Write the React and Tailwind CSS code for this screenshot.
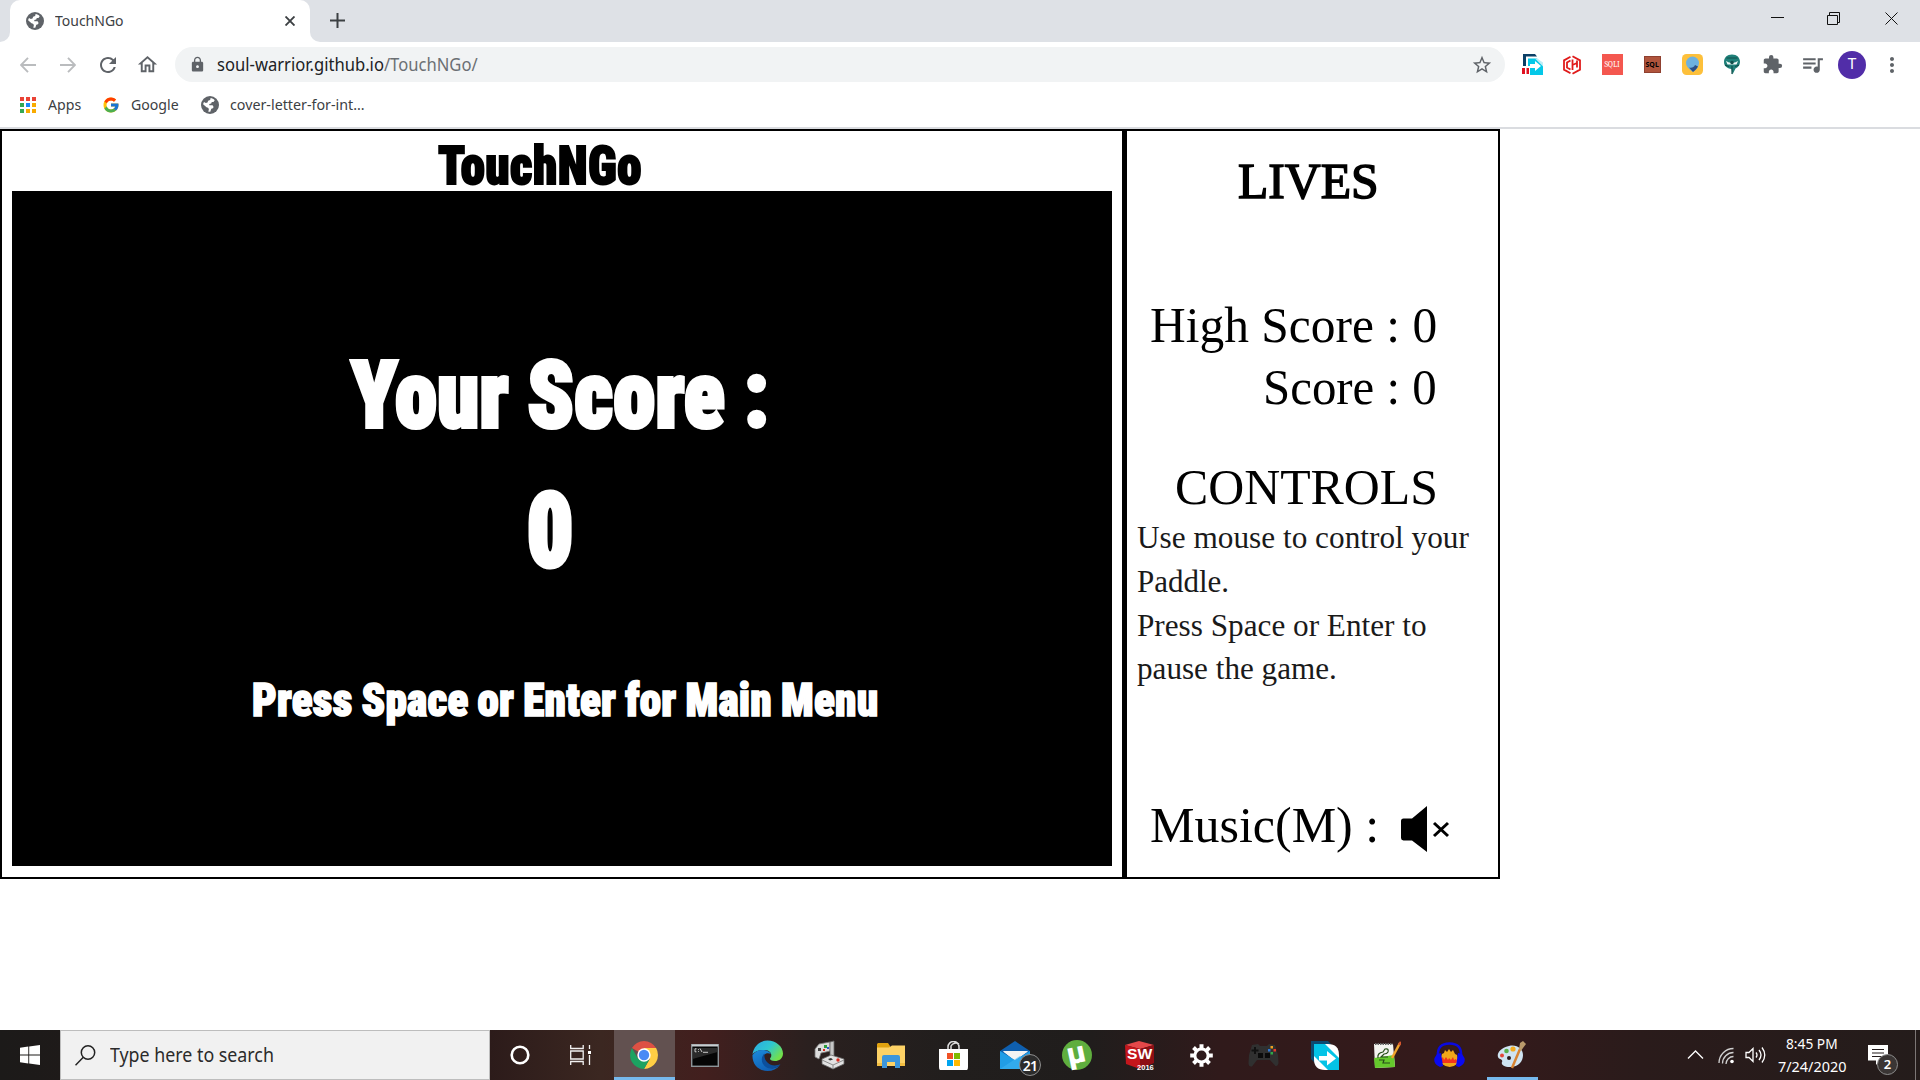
import { useLayoutEffect, useRef } from "react";
import {
  MdLock,
  MdRefresh,
  MdStarBorder,
  MdExtension,
  MdQueueMusic,
  MdMoreVert,
  MdOutlineHome,
} from "react-icons/md";
import { FcGoogle } from "react-icons/fc";

// Text on one line, condensed or widened to fill the given width.
function Fit({ width, className = "", children }) {
  const ref = useRef(null);
  useLayoutEffect(() => {
    const el = ref.current;
    el.style.transform = `scaleX(${width / el.offsetWidth})`;
  }, [width]);
  return (
    <span className={`block whitespace-nowrap ${className}`} style={{ width }}>
      <span ref={ref} className="inline-block origin-left">
        {children}
      </span>
    </span>
  );
}

const Globe = () => (
  <svg width="18" height="18" viewBox="0 0 18 18">
    <circle cx="9" cy="9" r="9" fill="#5f6368" />
    <path d="M9.600 2.100c1.600.2 3 .9 4.100 2.100l-1.200 1.700-1.700.2-.6 1.400-1.900.4v1.400h3.300l1 1.600-.7 1.400-1.600.5-1 2.900c-.7.2-1.400.1-2 0l.6-2.600-.9-1.300-1.500-.6L2.100 8.300c.2-.9.5-1.700.9-2.400l1.800 1 1.700-.4.6-1.800 2-.7z" fill="#fff" />
  </svg>
);

const AppsGrid = () => (
  <span className="grid grid-cols-3 gap-[2px]">
    {["bg-[#ea4335]", "bg-[#ea4335]", "bg-[#ea4335]", "bg-[#34a853]", "bg-[#1a88f8]", "bg-[#f9ab00]", "bg-[#34a853]", "bg-[#f9ab00]", "bg-[#f9ab00]"].map((c, i) => (
      <span key={i} className={`size-1 ${c}`} />
    ))}
  </span>
);

function TabStrip() {
  return (
    <div className="flex h-[42px] bg-[#dee1e6] text-[#3c4043]">
      <div className="flex w-[10px] bg-white">
        <span className="w-full rounded-br-[10px] bg-[#dee1e6]" />
      </div>
      <div className="flex w-[300px] items-center rounded-t-[10px] bg-white pl-4">
        <Globe />
        <Fit width={69} className="ml-[11px] pb-[2px] text-[15px] leading-5">TouchNGo</Fit>
        <svg className="ml-[161px]" width="10" height="10" viewBox="0 0 10 10" stroke="#3c4043" strokeWidth="1.9">
          <path d="M.5.5l9 9M9.500.5l-9 9" />
        </svg>
      </div>
      <div className="flex w-[10px] bg-white">
        <span className="w-full rounded-bl-[10px] bg-[#dee1e6]" />
      </div>
      <svg className="mt-[13px] ml-[10px]" width="15" height="15" viewBox="0 0 15 15" stroke="#3c4043" strokeWidth="2">
        <path d="M7.500 0v15M0 7.500h15" />
      </svg>
      <div className="ml-auto flex pr-[22px]">
        <svg className="mt-3" width="127" height="13" viewBox="0 0 127 13" fill="none" stroke="#111" strokeWidth="1">
          <path d="M0 5.500h13M56.500 3.500h10v9h-10zM58.500 3v-2.500h10v10h-2" />
          <path d="M114.500.5l12 12M126.500.5l-12 12" />
        </svg>
      </div>
    </div>
  );
}

const Slot = ({ children }) => (
  <span className="flex w-10 items-center justify-center">{children}</span>
);

function Extensions() {
  return (
    <div className="ml-[7px] flex text-[#5f6368]">
      <Slot>
        <svg width="21" height="21" viewBox="0 0 21 21">
          <path d="M1 0h12l2 2.500H4V12H1z" fill="#0b3f66" />
          <path d="M6 4.500h9l6 6V21H8V12H6z" fill="#04c8e8" />
          <path d="M15 4.500h-2l8 8v-4z" fill="#bfeef7" />
          <path d="M8 10h5V7l6 5-6 5v-3H8z" fill="#fff" />
          <path d="M0 14h3v6H0zM4.500 14h2.500v6H4.500z" fill="#e01020" />
        </svg>
      </Slot>
      <Slot>
        <svg width="20" height="20" viewBox="0 0 20 20" fill="none" stroke="#e01b1b" strokeWidth="1.800">
          <path d="M8.500 1.800L2 5.400v9.200l6.500 3.600M8.500 5.500L5 7.500v5l3.500 2M10.500 1.300L18 5.400v9.200l-7.500 4.100M10.500 4.500v10.500M10.500 10l4.500-2M15 5.500v7" />
        </svg>
      </Slot>
      <Slot>
        <span className="flex size-[21px] items-center justify-center bg-[#f4574f]">
          <Fit width={15} className="font-serif text-[8px] leading-none text-white">SQLI</Fit>
        </span>
      </Slot>
      <Slot>
        <span className="flex size-[17px] items-center justify-center border border-[#8f4030] bg-[#b0543c]">
          <Fit width={13} className="text-[7px] leading-none font-bold text-black">SQL</Fit>
        </span>
      </Slot>
      <Slot>
        <svg width="21" height="21" viewBox="0 0 21 21">
          <rect width="21" height="21" rx="4.500" fill="#fdc03b" />
          <path d="M11 18C6.500 15 4 12 4 9a6.500 6.500 0 0 1 13 0c0 3-2 6-6 9z" fill="#6db1df" />
          <path d="M11 18l-4-4.500c2.500.8 5 0 6-2.500l3 1.500c-1 2-3 4-5 5.500z" fill="#2d4f86" />
        </svg>
      </Slot>
      <Slot>
        <svg width="18" height="21" viewBox="0 0 18 21">
          <path d="M9 .5c5 0 8 3 8 7.500 0 3-2 5.500-4.500 6.500L9.500 20.500 8.500 15C4 14.500 1 12 1 8 1 3.500 4 .5 9 .5z" fill="#1f8079" />
          <path d="M3.500 4h11M2 11l4 1.500M16 11l-4 1.500M9 12v8" stroke="#124f4c" strokeWidth="1.200" />
          <path d="M3 7l3 1.500h6L15 7l-1.500 3.500h-9z" fill="#f3faf9" />
          <circle cx="9" cy="8.500" r="1.800" fill="#124f4c" />
        </svg>
      </Slot>
      <Slot><MdExtension size={21} /></Slot>
      <Slot><MdQueueMusic size={25} /></Slot>
      <Slot>
        <span className="flex size-7 items-center justify-center rounded-full bg-[#512da8] font-[Roboto] text-[15px] text-white">T</span>
      </Slot>
      <Slot><MdMoreVert size={24} /></Slot>
    </div>
  );
}

function Toolbar() {
  return (
    <div className="flex h-[45px] items-center pr-2">
      <svg className="ml-5" width="56" height="16" viewBox="0 0 56 16" fill="none" stroke="#babcbe" strokeWidth="1.900">
        <path d="M8 .8L1 8l7 7.200M1 8h15M48 .8L55 8l-7 7.200M55 8H40" />
      </svg>
      <MdRefresh className="ml-[20px] text-[#5f6368]" size={24} />
      <MdOutlineHome className="ml-[16px] text-[#5f6368]" size={23} />
      <div className="ml-4 flex h-[35px] w-[1330px] items-center rounded-full bg-[#f1f3f4] pr-3">
        <MdLock className="ml-[14px] text-[#5f6368]" size={17} />
        <Fit width={261} className="ml-[11px] pb-[2px] text-[18px] leading-6 text-[#202124]">
          soul-warrior.github.io<span className="text-[#6b6f73]">/TouchNGo/</span>
        </Fit>
        <MdStarBorder className="ml-auto text-[#5f6368]" size={22} />
      </div>
      <Extensions />
    </div>
  );
}

function Bookmarks() {
  return (
    <div className="flex h-[42px] items-center border-b-2 border-[#dadce0] pb-[5px] pl-5 text-[15px] leading-5 text-[#3c4043]">
      <AppsGrid />
      <Fit width={33} className="ml-3 pb-px">Apps</Fit>
      <FcGoogle className="ml-[21px]" size={18} />
      <Fit width={48} className="ml-[11px] pb-px">Google</Fit>
      <span className="ml-[22px]"><Globe /></span>
      <Fit width={135} className="ml-[11px] pb-px">cover-letter-for-int...</Fit>
    </div>
  );
}

function GameScreen() {
  return (
    <div className="w-[1125px] border-2 border-r-[3px] border-black px-[10px] font-[Roboto] font-black [font-stretch:75%] [word-spacing:-0.08em]">
      <h1 className="flex h-[60px] pt-2 pl-[426px] text-[54px] leading-[54px] tracking-[0.5px] text-black [-webkit-text-stroke:2px_black]">
        <Fit width={204}>TouchNGo</Fit>
      </h1>
      <div className="h-[675px] bg-black text-white">
        <div className="pt-[155px] pl-[339px] text-[93px] leading-[100px] tracking-[0.5px] [-webkit-text-stroke:4px_white]">
          <Fit width={418}>Your Score :</Fit>
        </div>
        <div className="mt-[35px] pl-[515px] text-[102px] leading-[100px] [-webkit-text-stroke:5px_white]">
          <Fit width={46}>0</Fit>
        </div>
        <div className="mt-[94px] pl-[240px] text-[47px] leading-[50px] tracking-[0.3px] [-webkit-text-stroke:1.700px_white]">
          <Fit width={626}>Press Space or Enter for Main Menu</Fit>
        </div>
      </div>
    </div>
  );
}

function SidePanel() {
  return (
    <div className="w-[375px] border-2 border-black pl-[10px] font-['Liberation_Serif'] text-[50px] leading-[62px] text-black">
      <h2 className="pt-[19px] pl-[101px] font-normal [-webkit-text-stroke:1.500px_black]">
        <Fit width={141}>LIVES</Fit>
      </h2>
      <div className="mt-[82px] flex w-[300px] flex-col items-end">
        <Fit width={287}>High Score : 0</Fit>
        <Fit width={174}>Score : 0</Fit>
      </div>
      <h2 className="mt-[39px] pl-[38px] font-normal leading-[60px]">
        <Fit width={263}>CONTROLS</Fit>
      </h2>
      <div className="-mt-px text-[31px] leading-[43.800px] text-[#1a1a1a]">
        <Fit width={332}>Use mouse to control your</Fit>
        <Fit width={92}>Paddle.</Fit>
        <Fit width={290}>Press Space or Enter to</Fit>
        <Fit width={200}>pause the game.</Fit>
      </div>
      <div className="mt-[103px] flex pl-[13px]">
        <Fit width={229}>Music(M) :</Fit>
        <svg className="mt-3 ml-[22px]" width="49" height="47" viewBox="0 0 49 47">
          <path d="M2.500 12.500H11L26 0v46L11 34.500H2.500Q0 34 0 32V15q0-2.500 2.500-2.500z" />
          <path d="M33 17l14 13M47 17L33 30" stroke="#000" strokeWidth="3" />
        </svg>
      </div>
    </div>
  );
}

const ChromeIcon = () => (
  <svg width="28" height="28" viewBox="0 0 28 28">
    <path d="M14 14L1.900 7A14 14 0 0 1 26.100 7z" fill="#dd5144" />
    <path d="M14 14V7h12.100A14 14 0 0 1 14 28l6-10.500z" fill="#ffce44" />
    <path d="M14 14l5 5-5 9A14 14 0 0 1 1.900 7l6 10.500z" fill="#1ca261" />
    <circle cx="14" cy="14" r="6.700" fill="#fff" />
    <circle cx="14" cy="14" r="5.200" fill="#4a8af5" />
  </svg>
);

const CmdIcon = () => (
  <svg width="28" height="23" viewBox="0 0 28 23">
    <rect x=".7" y=".7" width="26.600" height="21.600" fill="#050505" stroke="#8c9498" strokeWidth="1.400" />
    <path d="M1 1.500h26" stroke="#c9cdd0" strokeWidth="2" />
    <path d="M1.500 4h25v4L1.500 15z" fill="#3a3a3a" opacity=".7" />
    <path d="M5.500 4.800H4v3h1.500M7.500 5v.8M7.500 7v.8M9 4.500L11 8M12 8.300h5" stroke="#ddd" fill="none" strokeWidth=".9" />
  </svg>
);

const EdgeIcon = () => (
  <svg width="31" height="31" viewBox="0 0 31 31">
    <defs>
      <linearGradient id="edgeTop" x1="0" x2="1" y2=".6"><stop stopColor="#2aa7e6" /><stop offset=".55" stopColor="#2fc8cf" /><stop offset="1" stopColor="#72e04b" /></linearGradient>
      <linearGradient id="edgeLow" y1="0" x2=".5" y2="1"><stop stopColor="#1b8bdc" /><stop offset="1" stopColor="#1160b4" /></linearGradient>
    </defs>
    <path d="M.5 14.500C1.500 6 8 .5 15.500.5 24 .5 31 6.500 31 13.500c0 5-4 7.500-8 7.500-3.500 0-5-1.200-5-2.200 0-.8 1.300-1.300 1.300-3.600 0-3.200-3-5.200-7.300-5.200C6 10 2 12 .5 14.500z" fill="url(#edgeTop)" />
    <path d="M.5 15C3 11.500 7 9.500 12 10c3.500.4 6 2 7 4-5-2-8.500 1-8.500 5.500 0 6 6 9.500 11.500 8.500 2-.4 4.500-1.500 6-3C25 29 20.500 31 15.500 31 7 31 0 24.500.5 15z" fill="url(#edgeLow)" />
    <path d="M12.500 13.500c-2.500 2-3.500 6-2 9.500 2 4.500 6.500 6.500 12 5 3-.8 5-2.500 6-4-5 2.500-10 1.500-13-1.500-2.500-2.500-3.500-5.500-3-9z" fill="#0c4f9c" />
  </svg>
);

const JoystickIcon = () => (
  <svg width="31" height="30" viewBox="0 0 31 30">
    <path d="M1 17V9l4-5 11-2v9l-4 1-5 1-2 6z" fill="#dcdcdc" stroke="#777" strokeWidth=".8" />
    <path d="M10 5h3v3h-3z" fill="#2b9c3c" /><path d="M9 9h2v2H9z" fill="#d82c20" /><path d="M13 7h2v2h-2z" fill="#2b57c8" /><path d="M4 8h3v3H4z" fill="#444" />
    <path d="M16 2l4-1v18h-4z" fill="#c6c6c6" stroke="#666" strokeWidth=".8" />
    <path d="M8 19l9-4 13 4v5l-11 5-11-5z" fill="#e2e2e2" stroke="#666" strokeWidth=".8" />
    <path d="M8 20l11 5 11-5M19 25v4" stroke="#8b8b8b" fill="none" />
    <circle cx="24" cy="20" r="1.700" fill="#d82c20" /><path d="M14 19l3-1 2 1.500-3 1z" fill="#333" />
  </svg>
);

const FolderIcon = () => (
  <svg width="28" height="25" viewBox="0 0 28 25">
    <path d="M1 0h10l2 3v3H0V1z" fill="#e0a20f" />
    <path d="M0 4.500h12l3-2h13V23H0z" fill="#fdd266" />
    <path d="M5 25V14q0-2 2-2h14q2 0 2 2v11h-5v-6h-8v6z" fill="#3c96dc" />
    <path d="M0 20h5v3H0zM23 20h5v3h-5z" fill="#f2bd42" />
  </svg>
);

const StoreIcon = () => (
  <svg width="29" height="29" viewBox="0 0 29 29">
    <path d="M9 9V6a5.500 5.500 0 0 1 11 0v3M12 8V5a5.500 5.500 0 0 1 8-2" fill="none" stroke="#ddd" strokeWidth="1.500" />
    <path d="M0 8h29v18q0 3-1 3H1q-1 0-1-3z" fill="#fff" />
    <path d="M8 12h6v6H8z" fill="#f05125" /><path d="M15 12h6v6h-6z" fill="#7fba00" /><path d="M8 19h6v6H8z" fill="#00a4ef" /><path d="M15 19h6v6h-6z" fill="#ffb900" />
  </svg>
);

const MailIcon = () => (
  <span className="relative">
    <svg width="30" height="28" viewBox="0 0 30 28">
      <path d="M0 10L15 0l15 10v7H0z" fill="#0f5fae" />
      <path d="M3 10h25L15 20z" fill="#f3f3f3" />
      <path d="M0 10l15 9 15-9v18H0z" fill="#219de6" />
      <path d="M3 10.500h25L15 19z" fill="#f3f3f3" />
      <path d="M0 28L20 15l10 7v6z" fill="#3db2f2" opacity=".6" />
    </svg>
    <span className="absolute top-[13px] left-[19px] flex size-[22px] items-center justify-center rounded-full border border-[#8d8d8d] bg-[#2c2c2c] text-[14px] font-semibold tracking-tighter text-white">21</span>
  </span>
);

const UtorrentIcon = () => (
  <span className="flex size-[30px] items-center justify-center rounded-full bg-[#5fae3e]">
    <span className="-rotate-12 pb-1 font-[Roboto] text-[30px] leading-[30px] font-black text-white">µ</span>
  </span>
);

const SolidWorksIcon = () => (
  <span className="relative flex size-[29px] font-['Liberation_Sans'] font-bold text-white">
    <svg width="29" height="29" viewBox="0 0 29 29">
      <path d="M0 4L14 0l15 4-14 4z" fill="#e5484a" /><path d="M0 4l15 4v20L1 23z" fill="#c4161c" /><path d="M15 8l14-4v18l-14 6z" fill="#8e0f14" />
    </svg>
    <span className="absolute top-[5px] left-[2px]"><Fit width={25} className="text-[15px] leading-[16px]">SW</Fit></span>
    <span className="absolute top-[22px] left-[12px]"><Fit width={17} className="text-[8px] leading-[9px]">2016</Fit></span>
  </span>
);

const GearIcon = () => (
  <svg width="23" height="23" viewBox="-11.500 -11.500 23 23" stroke="#fff" fill="none">
    <circle r="6.600" strokeWidth="3" />
    {[0, 45, 90, 135].map((a) => (
      <path key={a} d="M0-11.300v4M0 7.300v4" strokeWidth="4" transform={`rotate(${a})`} />
    ))}
  </svg>
);

const GamepadIcon = () => (
  <svg width="31" height="24" viewBox="0 0 31 24">
    <path d="M4 2l6-1 2 2h7l2-2 6 1 3 10 .5 8q-.5 3.500-3 3L22 17H9l-5 6.500Q.5 24 .5 20L1 12z" fill="#303030" />
    <path d="M7 4v7M3.500 7.500h7" stroke="#111" strokeWidth="2" />
    <path d="M10 10h5v5h-5zM17 10h5v5h-5z" fill="#0b0b0b" />
    <path d="M22.500 3h2.500v2.500h-2.500z" fill="#f0a020" /><path d="M20 6h2.500v2.500H20z" fill="#2e78d8" /><path d="M25.500 6H28v2.500h-2.500z" fill="#e83828" /><path d="M22.500 9h2.500v2.500h-2.500z" fill="#30a848" />
  </svg>
);

const ArrowBoxIcon = () => (
  <svg width="28" height="29" viewBox="0 0 28 29">
    <path d="M0 0h17l3 3H4v19l-4-4z" fill="#0c4a70" />
    <path d="M3 3h14q11 0 11 11v15H14Q3 29 3 18z" fill="#fff" />
    <path d="M3 3h11l14 14v12H17L3 15z" fill="#04c3e6" />
    <path d="M8 15h8v-5l9 7.500-9 7v-5H8z" fill="#fff" />
  </svg>
);

const NotepadIcon = () => (
  <svg width="28" height="28" viewBox="0 0 28 28">
    <path d="M1 3h19l2 23-20 1z" fill="#f4f4f0" />
    <path d="M1 17l20-3 1 12-20 1z" fill="#65c92c" />
    <path d="M2 3h18" stroke="#666" strokeWidth="2" strokeDasharray="1.500 1" />
    <path d="M5 17q-1-5 5-6l2-3q4-1 3 3-1 2-4 2l-3 3h7M6 19h5l-1 3h7" stroke="#274d1b" fill="none" strokeWidth="1.200" />
    <path d="M27 2l-8 15" stroke="#f0a42c" strokeWidth="2.500" /><path d="M28 1l-2 3" stroke="#d6552e" strokeWidth="2.500" />
  </svg>
);

const AudacityIcon = () => (
  <svg width="31" height="27" viewBox="0 0 31 27">
    <path d="M8 22l-2-5 2-5 2-1 1-3 2 2 2-3 2 3 2-2 2 4 2 1 1 4-1 5q-7 6-15 0z" fill="#f0a818" />
    <path d="M7 17l2-2 1 3 2-3 2 3 1-2 2 2 2-3 1 3 2-1 1 2-1 2H8z" fill="#f3331c" />
    <path d="M4 14Q3 1.500 15.500 1.500T27 14" fill="none" stroke="#0a0ae0" strokeWidth="2.500" />
    <path d="M3 12l4-1 2 13-3 1Q-1 22 .5 16zM28 12l-4-1-2 13 3 1q7-3 5.500-9z" fill="#0a0af0" />
  </svg>
);

const PaintIcon = () => (
  <svg width="29" height="28" viewBox="0 0 29 28">
    <path d="M12 5C20 3 26 8 26 14c0 6-4 12-13 12-7 0-9-3-8-5s-1-2.500-3-3.500C-1 15 1 7.500 12 5z" fill="#cfe4f2" />
    <circle cx="12" cy="17" r="2" fill="#2b1a1b" />
    <circle cx="5" cy="14.500" r="2" fill="#e2483a" /><circle cx="9.500" cy="10" r="2.300" fill="#58b04a" /><circle cx="16" cy="8" r="2.600" fill="#f3ab22" />
    <path d="M15 27l8-19" stroke="#d88432" strokeWidth="2.500" /><path d="M22 8l1-6 3-2 3 3-3 4-2 3z" fill="#b99a6b" />
  </svg>
);

const APPS = [CmdIcon, EdgeIcon, JoystickIcon, FolderIcon, StoreIcon, MailIcon, UtorrentIcon, SolidWorksIcon, GearIcon, GamepadIcon, ArrowBoxIcon, NotepadIcon, AudacityIcon];

function Taskbar() {
  return (
    <div className="flex h-[50px] bg-[linear-gradient(90deg,#1c1a19_0px,#2c1b1a_490px,#3b2721_600px,#421f1e_705px,#2a201f_810px,#211e1d_950px,#201d1c_1090px,#301a1b_1220px,#351a1b_1480px,#2a1b1b_1640px,#241c1b_1920px)]">
      <div className="flex w-[60px] items-center justify-center">
        <svg width="20" height="20" viewBox="0 0 20 20" fill="#fff">
          <path d="M0 2.700l8.300-1.100v8H0zM9.200 1.400L20 0v9.600H9.200zM0 10.400h8.300v8L0 17.300zM9.200 10.400H20V20L9.200 18.600z" />
        </svg>
      </div>
      <div className="flex w-[430px] items-center border border-[#bdbdbd] bg-[#f1f1f1] text-[#2b2b2b]">
        <svg className="ml-[14px]" width="21" height="21" viewBox="0 0 21 21" fill="none" stroke="#222" strokeWidth="1.500">
          <circle cx="13" cy="7.500" r="6.700" /><path d="M8.300 12.300L.5 20.300" />
        </svg>
        <Fit width={164} className="ml-[14px] text-[19px] leading-6">Type here to search</Fit>
      </div>
      <div className="flex w-[60px] items-center justify-center">
        <svg width="20" height="20" viewBox="0 0 20 20"><circle cx="10" cy="10" r="8.300" fill="none" stroke="#fff" strokeWidth="2.600" /></svg>
      </div>
      <div className="flex w-[64px] items-center justify-center pr-[3px]">
        <svg width="22" height="20" viewBox="0 0 22 20" fill="none" stroke="#f2f2f2" strokeWidth="1.300">
          <path d="M.7 0v3.500h12.500V0M.7 20v-3.500h12.500V20M.7 6h12.500v8H.7zM19.500 0v4M19.500 10v10" /><path d="M18 6h3v3h-3z" fill="#fff" stroke="none" />
        </svg>
      </div>
      <div className="flex w-[61px] items-center justify-center border-b-[3px] border-[#76b9ed] bg-[#625150] pt-[2px] pr-[2px]">
        <ChromeIcon />
      </div>
      <div className="-ml-px flex">
        {APPS.map((Icon, i) => (
          <span key={i} className="flex w-[62px] items-center justify-center"><Icon /></span>
        ))}
      </div>
      <div className="ml-[7px] flex w-[51px] items-center justify-center border-b-[3px] border-[#76b9ed] pt-[3px] pr-[2px]">
        <PaintIcon />
      </div>
      <div className="ml-auto flex items-center text-white">
        <svg width="80" height="22" viewBox="0 0 80 22" fill="none" stroke="#fff" strokeWidth="1.300">
          <path d="M1 14.500L8.500 7l7.500 7.500" />
          <path d="M32 19A14.500 14.500 0 0 1 46.500 4.500M35.500 19.500A11 11 0 0 1 46.500 8.500M39 20a7.500 7.500 0 0 1 7.500-7.500" stroke="#d0d0d0" />
          <circle cx="45" cy="17.500" r="1.800" fill="#fff" stroke="none" />
          <path d="M59 8.500h3l4-4v13l-4-4h-3zM69 8.500q2 2.500 0 5M72 6q4 5 0 10M75 3.500q5.500 7.500 0 15" />
        </svg>
        <div className="ml-[11px] flex w-[68px] flex-col items-center text-[14px] leading-[23px]">
          <Fit width={52}>8:45 PM</Fit>
          <Fit width={68}>7/24/2020</Fit>
        </div>
        <div className="relative ml-[22px] w-[47px]">
          <svg width="21" height="20" viewBox="0 0 21 20"><path d="M0 0h20v15.500H12L8 20v-4.500H0z" fill="#fff" /><path d="M4 4.500h12M4 8h12M4 11.500h12" stroke="#231b1b" strokeWidth="1.200" /></svg>
          <span className="absolute top-[9px] left-[9px] flex size-[21px] items-center justify-center rounded-full border border-[#8d8d8d] bg-[#3a3534] text-[13px] font-semibold">2</span>
        </div>
        <span className="mr-1 h-[50px] w-px bg-[#7c7675]" />
      </div>
    </div>
  );
}

export default function App() {
  return (
    <div className="flex h-[1080px] w-[1920px] flex-col overflow-hidden bg-white font-['Noto_Sans','Open_Sans',sans-serif]">
      <TabStrip />
      <Toolbar />
      <Bookmarks />
      <main className="flex grow">
        <div className="flex h-[750px]">
          <GameScreen />
          <SidePanel />
        </div>
      </main>
      <Taskbar />
    </div>
  );
}
